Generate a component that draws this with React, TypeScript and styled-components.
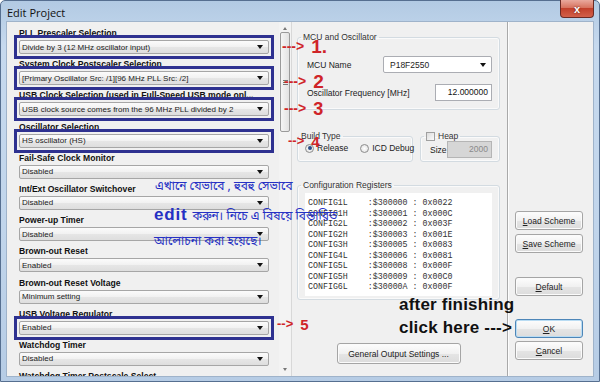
import styled, { createGlobalStyle } from 'styled-components';

const GlobalStyle = createGlobalStyle`
	html, body {
		margin: 0;
		padding: 0;
	}
	body {
		width: 600px;
		height: 382px;
		overflow: hidden;
		background: #ffffff;
		font-family: "Liberation Sans", Arial, sans-serif;
	}
`;

const Window = styled.div`
	position: relative;
	width: 600px;
	height: 382px;
	box-sizing: border-box;
	display: flex;
	flex-direction: column;
	border: 1px solid #566f90;
	border-radius: 5px 5px 0 0;
	background: linear-gradient(180deg, #b2cae3 0%, #c6d9ee 12%, #c1d5eb 60%, #b6cce5 100%);
`;

const TitleBar = styled.div`
	height: 21px;
	display: flex;
	align-items: flex-start;
`;

const Title = styled.div`
	padding: 4px 0 0 6px;
	font-family: "Open Sans", "Liberation Sans", sans-serif;
	font-size: 11px;
	color: #111;
`;

const CloseButton = styled.div`
	margin: -1px 5px 0 auto;
	width: 34px;
	height: 18px;
	box-sizing: border-box;
	border: 1px solid #6b2a24;
	border-top: none;
	border-radius: 0 0 4px 4px;
	background: linear-gradient(180deg, #e9a99d 0%, #d7735f 45%, #c2402b 50%, #d2604a 100%);
	display: flex;
	align-items: center;
	justify-content: center;
	color: #fff;
	font-weight: bold;
	font-size: 11px;
	text-shadow: 0 0 2px #5a1a12;
`;

const Client = styled.div`
	flex: 1;
	margin: 0 6px 5px 6px;
	display: flex;
	background: #f0f0f0;
	box-shadow: 0 0 0 1px #9fb3ca;
	overflow: hidden;
`;

/* left list of config bits */

const ConfigPanel = styled.div`
	width: 285px;
	display: flex;
`;

const ConfigList = styled.div`
	flex: 1;
	padding: 4px 0 0 12px;
	overflow: hidden;
`;

const ConfigItem = styled.div`
	height: 31.2px;
	display: flex;
	flex-direction: column;
`;

const ConfigLabel = styled.div`
	height: 13px;
	line-height: 14px;
	font-size: 8.6px;
	font-weight: bold;
	color: #111;
	white-space: nowrap;
`;

const SelectFrame = styled.div<{ $mark?: boolean }>`
	width: fit-content;
	margin-top: 1px;
	outline: ${(p) => (p.$mark ? '3px solid #2e3190' : 'none')};
	outline-offset: 2px;
`;

const Select = styled.div<{ $width?: number; $height?: number }>`
	width: ${(p) => p.$width ?? 250}px;
	height: ${(p) => p.$height ?? 14}px;
	box-sizing: border-box;
	border: 1px solid #a6a6a6;
	border-radius: 2px;
	background: linear-gradient(180deg, #fbfbfb 0%, #f1f1f1 50%, #e6e6e6 51%, #dedede 100%);
	display: flex;
	align-items: center;
	padding-left: 2px;
	font-size: 8px;
	color: #222;
	white-space: nowrap;
`;

const FlatSelect = styled(Select)`
	background: #ffffff;
	border-color: #abadb3;
	padding-left: 6px;
	font-size: 8.5px;
`;

const DropArrow = styled.span`
	margin-left: auto;
	margin-right: 5px;
	width: 0;
	height: 0;
	border-left: 3.5px solid transparent;
	border-right: 3.5px solid transparent;
	border-top: 4px solid #111;
`;

const ScrollBar = styled.div`
	width: 12px;
	display: flex;
	flex-direction: column;
	align-items: center;
	border-right: 1px solid #d8d8d8;
	background: #f3f3f3;
`;

const ScrollArrow = styled.div<{ $down?: boolean }>`
	margin: ${(p) => (p.$down ? 'auto 0 5px' : '5px 0 2px')};
	width: 0;
	height: 0;
	border-left: 2.5px solid transparent;
	border-right: 2.5px solid transparent;
	${(p) => (p.$down ? 'border-top: 3px solid #777;' : 'border-bottom: 3px solid #777;')}
`;

const Thumb = styled.div`
	width: 10px;
	height: 100px;
	box-sizing: border-box;
	border: 1px solid #9a9a9a;
	border-radius: 2px;
	background: linear-gradient(90deg, #f5f5f5, #e2e2e2);
	display: flex;
	flex-direction: column;
	align-items: center;
	justify-content: center;
	gap: 1px;
`;

const Grip = styled.div`
	width: 5px;
	height: 1px;
	background: #777;
`;

/* centre pane */

const CenterPane = styled.div`
	width: 215px;
	padding: 10px 7px 0 5px;
	box-sizing: border-box;
	display: flex;
	flex-direction: column;
	font-size: 8.5px;
	color: #222;
`;

const Group = styled.fieldset<{ $height: number; $width?: number; $top?: number; $pad?: string }>`
	margin: ${(p) => p.$top ?? 0}px 0 0 0;
	padding: ${(p) => p.$pad ?? '0 7px 0 9px'};
	min-width: 0;
	height: ${(p) => p.$height}px;
	width: ${(p) => (p.$width ? `${p.$width}px` : 'auto')};
	box-sizing: border-box;
	border: 1px solid #d3dbe1;
	border-radius: 3px;
	box-shadow: inset 0 0 0 1px #fafafa;
`;

const Legend = styled.legend`
	padding: 0 2px;
	margin-left: -6px;
	font-size: 8.5px;
	line-height: 10px;
	color: #333;
	display: flex;
	align-items: center;
	gap: 3px;
`;

const FieldRow = styled.div<{ $top: number }>`
	display: flex;
	align-items: center;
	justify-content: space-between;
	margin-top: ${(p) => p.$top}px;
`;

const TextBox = styled.div<{ $width: number; $disabled?: boolean }>`
	width: ${(p) => p.$width}px;
	height: 17px;
	box-sizing: border-box;
	border: 1px solid ${(p) => (p.$disabled ? '#b5b5b5' : '#abadb3')};
	background: ${(p) => (p.$disabled ? '#d6d6d6' : '#ffffff')};
	color: ${(p) => (p.$disabled ? '#8a8a8a' : '#111')};
	text-align: right;
	padding-right: 3px;
	line-height: 15px;
	font-size: 8.5px;
`;

const OptionRow = styled.div`
	display: flex;
	align-items: center;
	margin-top: 2px;
	gap: 12px;
	white-space: nowrap;
`;

const GroupRow = styled.div`
	display: flex;
	gap: 7px;
	margin-top: 21px;
`;

const Radio = styled.span<{ $on?: boolean }>`
	display: inline-flex;
	align-items: center;
	justify-content: center;
	width: 9px;
	height: 9px;
	box-sizing: border-box;
	border-radius: 50%;
	border: 1px solid #8d8d8d;
	background: radial-gradient(circle, #ffffff, #dcdcdc);
	margin-right: 3px;
	&::after {
		content: '';
		width: 4px;
		height: 4px;
		border-radius: 50%;
		background: ${(p) => (p.$on ? '#2a4d88' : 'transparent')};
	}
`;

const Option = styled.span`
	display: inline-flex;
	align-items: center;
	font-size: 8.5px;
	color: #222;
`;

const CheckBox = styled.span`
	width: 7px;
	height: 7px;
	border: 1px solid #a0a0a0;
	background: linear-gradient(135deg, #dcdcdc, #fbfbfb);
`;

const RegisterList = styled.div`
	margin: 3px 0 0 -2px;
	height: 103px;
	background: #ffffff;
	padding: 5px 0 0 3px;
	box-sizing: border-box;
`;

const RegisterLine = styled.div`
	font-family: "Liberation Mono", "Courier New", monospace;
	font-size: 8.3px;
	line-height: 10.5px;
	color: #333;
	white-space: pre;
`;

const Button = styled.div<{ $width?: number; $focus?: boolean }>`
	width: ${(p) => p.$width ?? 68}px;
	height: 19px;
	box-sizing: border-box;
	border: 1px solid ${(p) => (p.$focus ? '#4d86b8' : '#a5a5a5')};
	border-radius: 3px;
	background: linear-gradient(180deg, #fdfdfd 0%, #f1f1f1 50%, #e5e5e5 51%, #dcdcdc 100%);
	box-shadow: ${(p) => (p.$focus ? 'inset 0 0 0 1px #b9dcf3' : 'inset 0 0 0 1px #fbfbfb')};
	display: flex;
	align-items: center;
	justify-content: center;
	font-size: 8.5px;
	color: #222;
	white-space: nowrap;
`;

const OutputButton = styled(Button)`
	align-self: center;
	height: 21px;
	margin-top: 43px;
`;

/* right column */

const ButtonColumn = styled.div`
	flex: 1;
	border-left: 1px solid #a9a9a9;
	box-shadow: inset 1px 0 0 #fdfdfd;
	display: flex;
	flex-direction: column;
	padding: 189px 0 0 7px;
`;

const Gap = styled.div<{ $h: number }>`
	height: ${(p) => p.$h}px;
	flex-shrink: 0;
`;

/* annotations drawn over the screenshot */

const Note = styled.div<{ $x: number; $y: number; $size: number; $color: string; $spacing?: number }>`
	position: absolute;
	left: ${(p) => p.$x}px;
	top: ${(p) => p.$y}px;
	font-size: ${(p) => p.$size}px;
	font-weight: 700;
	letter-spacing: ${(p) => p.$spacing ?? 0}px;
	color: ${(p) => p.$color};
	line-height: 1;
	white-space: nowrap;
	pointer-events: none;
`;

const Num = styled.span<{ $size: number }>`
	font-size: ${(p) => p.$size}px;
	margin-left: 7px;
	vertical-align: -2px;
`;

const Bangla = styled.span`
	font-family: "Noto Sans Bengali", "Noto Sans", "Lohit Bengali", sans-serif;
	font-weight: 400;
	font-size: 12px;
`;

const BigWord = styled.span`
	font-family: "Liberation Sans", Arial, sans-serif;
	font-weight: 900;
	font-size: 17px;
	letter-spacing: 0.8px;
	margin-right: 5px;
`;

const u = (s: string) => <u>{s}</u>;

const items = [
	{ label: 'PLL Prescaler Selection', value: 'Divide by 3 (12 MHz oscillator input)', mark: true },
	{ label: 'System Clock Postscaler Selection', value: '[Primary Oscillator Src: /1][96 MHz PLL Src: /2]', mark: true },
	{ label: 'USB Clock Selection (used in Full-Speed USB mode onl...', value: 'USB clock source comes from the 96 MHz PLL divided by 2', mark: true },
	{ label: 'Oscillator Selection', value: 'HS oscillator (HS)', mark: true },
	{ label: 'Fail-Safe Clock Monitor', value: 'Disabled' },
	{ label: 'Int/Ext Oscillator Switchover', value: 'Disabled' },
	{ label: 'Power-up Timer', value: 'Disabled' },
	{ label: 'Brown-out Reset', value: 'Enabled' },
	{ label: 'Brown-out Reset Voltage', value: 'Minimum setting' },
	{ label: 'USB Voltage Regulator', value: 'Enabled', mark: true },
	{ label: 'Watchdog Timer', value: 'Disabled' },
	{ label: 'Watchdog Timer Postscale Select', value: '1:32768' }
];

const registers = [
	['CONFIG1L', '300000', '0022'],
	['CONFIG1H', '300001', '000C'],
	['CONFIG2L', '300002', '003F'],
	['CONFIG2H', '300003', '001E'],
	['CONFIG3H', '300005', '0083'],
	['CONFIG4L', '300006', '0081'],
	['CONFIG5L', '300008', '000F'],
	['CONFIG5H', '300009', '00C0'],
	['CONFIG6L', '30000A', '000F']
];

const red = '#cf2428';

const App = () => {
	return (
		<>
			<GlobalStyle />
			<Window>
				<TitleBar>
					<Title>Edit Project</Title>
					<CloseButton>x</CloseButton>
				</TitleBar>
				<Client>
					<ConfigPanel>
						<ConfigList>
							{items.map((item) => (
								<ConfigItem key={item.label}>
									<ConfigLabel>{item.label}</ConfigLabel>
									<SelectFrame $mark={item.mark}>
										<Select>
											{item.value}
											<DropArrow />
										</Select>
									</SelectFrame>
								</ConfigItem>
							))}
						</ConfigList>
						<ScrollBar>
							<ScrollArrow />
							<Thumb>
								<Grip />
								<Grip />
								<Grip />
							</Thumb>
							<ScrollArrow $down />
						</ScrollBar>
					</ConfigPanel>
					<CenterPane>
						<Group $height={78}>
							<Legend>MCU and Oscillator</Legend>
							<FieldRow $top={14}>
								<span>MCU Name</span>
								<FlatSelect $width={109} $height={17}>
									P18F2550
									<DropArrow />
								</FlatSelect>
							</FieldRow>
							<FieldRow $top={11}>
								<span>Oscillator Frequency [MHz]</span>
								<TextBox $width={57}>12.000000</TextBox>
							</FieldRow>
						</Group>
						<GroupRow>
							<Group $height={31} $width={116} $pad="0 2px 0 7px">
								<Legend>Build Type</Legend>
								<OptionRow>
									<Option>
										<Radio $on />
										Release
									</Option>
									<Option>
										<Radio />
										ICD Debug
									</Option>
								</OptionRow>
							</Group>
							<Group $height={31} $width={80}>
								<Legend>
									<CheckBox />
									Heap
								</Legend>
								<FieldRow $top={0}>
									<span>Size</span>
									<TextBox $width={45} $disabled>
										2000
									</TextBox>
								</FieldRow>
							</Group>
						</GroupRow>
						<Group $height={120} $top={18}>
							<Legend>Configuration Registers</Legend>
							<RegisterList>
								{registers.map(([name, addr, val]) => (
									<RegisterLine key={name}>{`${name}    :$${addr} : 0x${val}`}</RegisterLine>
								))}
							</RegisterList>
						</Group>
						<OutputButton $width={124}>General Output Settings ...</OutputButton>
					</CenterPane>
					<ButtonColumn>
						<Button>{u('L')}oad Scheme</Button>
						<Gap $h={4} />
						<Button>{u('S')}ave Scheme</Button>
						<Gap $h={24} />
						<Button>{u('D')}efault</Button>
						<Gap $h={23} />
						<Button $focus>{u('O')}K</Button>
						<Gap $h={3} />
						<Button>{u('C')}ancel</Button>
					</ButtonColumn>
				</Client>

				<Note $x={281} $y={36} $size={14} $color={red}>
					---&gt;<Num $size={19}>1.</Num>
				</Note>
				<Note $x={283} $y={71} $size={14} $color={red}>
					---&gt;<Num $size={19}>2</Num>
				</Note>
				<Note $x={283} $y={99} $size={14} $color={red}>
					---&gt;<Num $size={18}>3</Num>
				</Note>
				<Note $x={287} $y={133} $size={13} $color={red}>
					--&gt;<Num $size={15}>4</Num>
				</Note>
				<Note $x={276} $y={316} $size={13} $color={red}>
					--&gt;<Num $size={15}>5</Num>
				</Note>

				<Note $x={154} $y={179} $size={12} $color="#2530c4">
					<Bangla>এখানে যেভাবে , হুবহু সেভাবে</Bangla>
				</Note>
				<Note $x={153} $y={205} $size={12} $color="#2530c4">
					<BigWord>edit</BigWord>
					<Bangla>করুন। নিচে এ বিষয়ে বিস্তারিত</Bangla>
				</Note>
				<Note $x={153} $y={234} $size={12} $color="#2530c4">
					<Bangla>আলোচনা করা হয়েছে।</Bangla>
				</Note>

				<Note $x={398} $y={295} $size={17} $color="#111" $spacing={0.2}>
					after finishing
				</Note>
				<Note $x={398} $y={318} $size={17} $color="#111" $spacing={0.2}>
					click here ---&gt;
				</Note>
			</Window>
		</>
	);
};

export default App;
